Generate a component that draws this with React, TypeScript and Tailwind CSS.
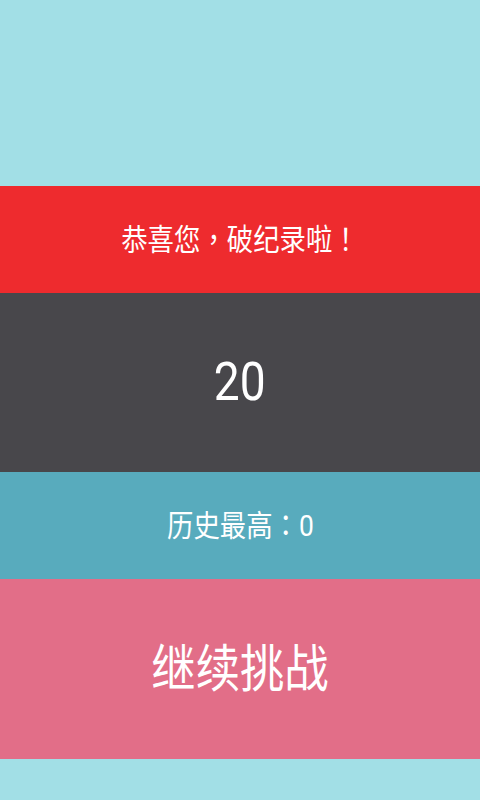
export default function App() {
    const font = { fontFamily: '"Roboto", "Noto Sans CJK TC", sans-serif' };

    return (
        <div className="flex h-[800px] w-full flex-col bg-[#a2dfe6] text-white" style={font}>
            {/* empty top area */}
            <div className="h-[186px] shrink-0" />

            <div className="flex h-[107px] shrink-0 items-center justify-center bg-[#ee2b2e]">
                <span className="scale-x-[0.88] text-[30px] leading-none">恭喜您，破纪录啦！</span>
            </div>

            <div className="flex h-[179px] shrink-0 items-center justify-center bg-[#48474b]">
                <span className="scale-x-[0.87] text-[53px] leading-none">20</span>
            </div>

            <div className="flex h-[107px] shrink-0 items-center justify-center bg-[#58abbd]">
                <span className="scale-x-[0.88] text-[30px] leading-none">历史最高：0</span>
            </div>

            <button className="flex h-[180px] shrink-0 items-center justify-center bg-[#e26e88]">
                <span className="scale-x-[0.87] text-[51px] leading-none">继续挑战</span>
            </button>

            <div className="flex-1" />
        </div>
    );
}
